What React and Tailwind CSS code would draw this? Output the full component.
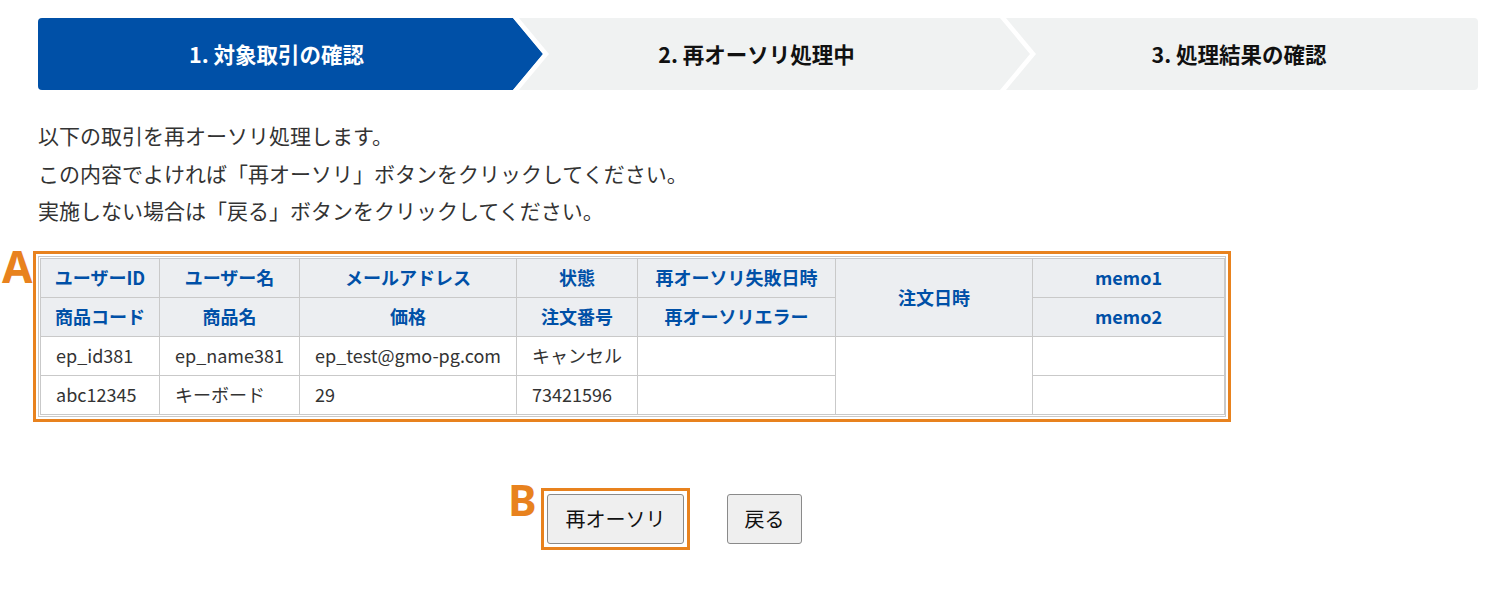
import React from "react";

const FONT = { fontFamily: '"Noto Sans CJK JP", "Noto Sans", sans-serif' };

function Chevron({ fill }) {
  return (
    <svg
      className="absolute left-full top-0 z-10 h-full w-[38px]"
      viewBox="0 0 38 72"
      preserveAspectRatio="none"
    >
      {fill && <polygon points="0,0 30,36 0,72" fill={fill} />}
      <polygon points="0,0 6,0 36,36 6,72 0,72 30,36" fill="#ffffff" />
    </svg>
  );
}

function Th({ children, rowSpan }) {
  return (
    <th
      rowSpan={rowSpan}
      className="h-[39px] whitespace-nowrap border border-[#c9c9c9] bg-[#eceef1] px-2 text-center text-[18px] font-bold text-[#0050a7]"
    >
      {children}
    </th>
  );
}

function Td({ children, rowSpan }) {
  return (
    <td
      rowSpan={rowSpan}
      className="h-[39px] whitespace-nowrap border border-[#c9c9c9] bg-white px-[15px] text-left text-[18px] text-[#333333]"
    >
      {children}
    </td>
  );
}

export default function App() {
  return (
    <div className="min-h-[595px] w-full bg-white pt-[18px] pl-[38px] pr-[10px]" style={FONT}>
      {/* Step bar */}
      <div className="flex h-[72px] w-[1440px] rounded-[4px] bg-[#f0f2f2]">
        <div className="relative flex w-[475px] items-center justify-center rounded-l-[4px] bg-[#0050a7] pl-[2px]">
          <span className="text-[21.5px] font-bold text-white">1. 対象取引の確認</span>
          <Chevron fill="#0050a7" />
        </div>
        <div className="relative flex w-[487px] items-center justify-center">
          <span className="text-[21.5px] font-bold text-[#111111]">2. 再オーソリ処理中</span>
          <Chevron />
        </div>
        <div className="flex flex-1 items-center justify-center">
          <span className="text-[21.5px] font-bold text-[#111111]">3. 処理結果の確認</span>
        </div>
      </div>

      {/* Description */}
      <div className="mt-[27px] text-[21px] leading-[37.5px] text-[#333333]">
        <p>以下の取引を再オーソリ処理します。</p>
        <p>この内容でよければ「再オーソリ」ボタンをクリックしてください。</p>
        <p>実施しない場合は「戻る」ボタンをクリックしてください。</p>
      </div>

      {/* Table with annotation A */}
      <div className="-ml-[36px] mt-[21px] flex items-start">
        <div
          className="-mt-[7px] w-[31px] text-[44px] font-bold leading-none text-[#e8821e]"
          style={{ fontFamily: '"Noto Sans", sans-serif' }}
        >
          A
        </div>
        <div className="w-[1198px] border-[3px] border-[#e8821e] p-[2px]">
          <div className="border border-[#c9c9c9] bg-white p-px">
            <table className="w-[1184px] table-fixed border-collapse">
              <colgroup>
                <col className="w-[119px]" />
                <col className="w-[140px]" />
                <col className="w-[217px]" />
                <col className="w-[121px]" />
                <col className="w-[198px]" />
                <col className="w-[197px]" />
                <col className="w-[192px]" />
              </colgroup>
              <thead>
                <tr>
                  <Th>ユーザーID</Th>
                  <Th>ユーザー名</Th>
                  <Th>メールアドレス</Th>
                  <Th>状態</Th>
                  <Th>再オーソリ失敗日時</Th>
                  <Th rowSpan={2}>注文日時</Th>
                  <Th>memo1</Th>
                </tr>
                <tr>
                  <Th>商品コード</Th>
                  <Th>商品名</Th>
                  <Th>価格</Th>
                  <Th>注文番号</Th>
                  <Th>再オーソリエラー</Th>
                  <Th>memo2</Th>
                </tr>
              </thead>
              <tbody>
                <tr>
                  <Td>ep_id381</Td>
                  <Td>ep_name381</Td>
                  <Td>ep_test@gmo-pg.com</Td>
                  <Td>キャンセル</Td>
                  <Td></Td>
                  <Td rowSpan={2}></Td>
                  <Td></Td>
                </tr>
                <tr>
                  <Td>abc12345</Td>
                  <Td>キーボード</Td>
                  <Td>29</Td>
                  <Td>73421596</Td>
                  <Td></Td>
                  <Td></Td>
                </tr>
              </tbody>
            </table>
          </div>
        </div>
      </div>

      {/* Buttons with annotation B */}
      <div className="ml-[470px] mt-[66px] flex items-start">
        <div
          className="-mt-[10px] w-[33px] text-[43px] font-bold leading-none text-[#e8821e]"
          style={{ fontFamily: '"Noto Sans", sans-serif' }}
        >
          B
        </div>
        <div className="border-[3px] border-[#e8821e] p-[3px]">
          <button className="flex h-[50px] w-[137px] items-center justify-center rounded-[3px] border border-[#8a8a8a] bg-[#efefef] text-[20px] text-[#111111]">
            再オーソリ
          </button>
        </div>
        <button className="ml-[37px] mt-[6px] flex h-[50px] w-[75px] items-center justify-center rounded-[3px] border border-[#8a8a8a] bg-[#efefef] text-[20px] text-[#111111]">
          戻る
        </button>
      </div>
    </div>
  );
}
